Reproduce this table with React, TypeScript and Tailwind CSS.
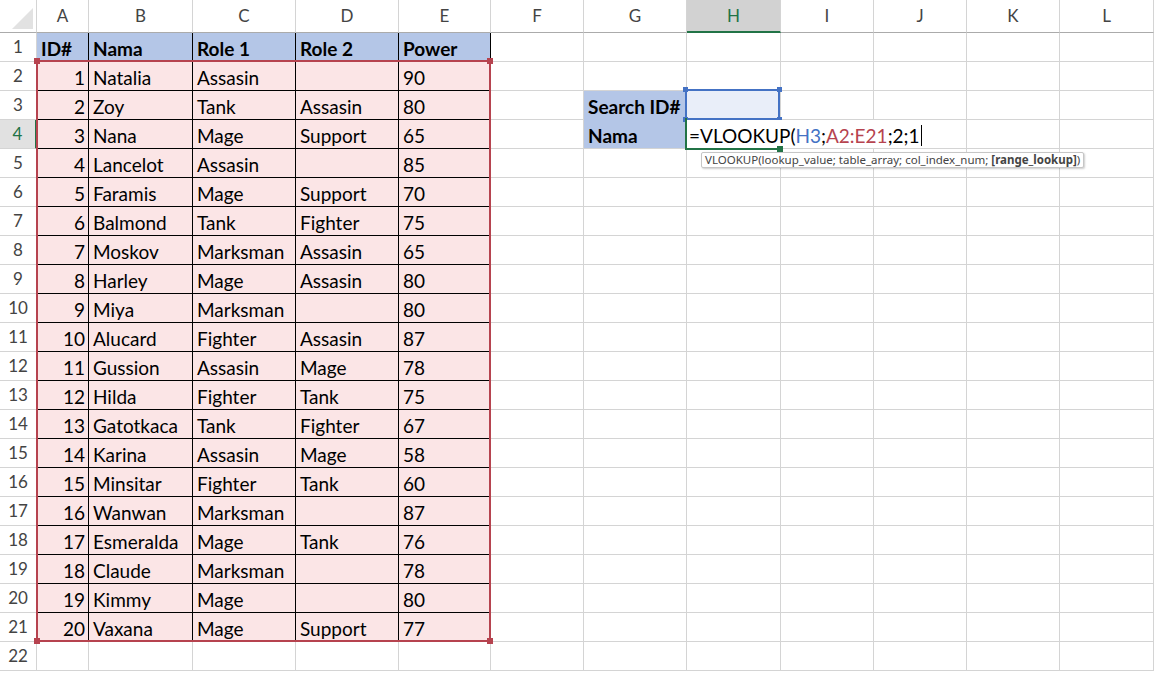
import React from 'react';

type Kind = 'plain' | 'head' | 'body' | 'label' | 'label2' | 'search' | 'editor';

interface CellDef {
  text?: string;
  kind: Kind;
  right?: boolean;
}

const letters = ['A', 'B', 'C', 'D', 'E', 'F', 'G', 'H', 'I', 'J', 'K', 'L'];

const heroes: [number, string, string, string, number][] = [
  [1, 'Natalia', 'Assasin', '', 90],
  [2, 'Zoy', 'Tank', 'Assasin', 80],
  [3, 'Nana', 'Mage', 'Support', 65],
  [4, 'Lancelot', 'Assasin', '', 85],
  [5, 'Faramis', 'Mage', 'Support', 70],
  [6, 'Balmond', 'Tank', 'Fighter', 75],
  [7, 'Moskov', 'Marksman', 'Assasin', 65],
  [8, 'Harley', 'Mage', 'Assasin', 80],
  [9, 'Miya', 'Marksman', '', 80],
  [10, 'Alucard', 'Fighter', 'Assasin', 87],
  [11, 'Gussion', 'Assasin', 'Mage', 78],
  [12, 'Hilda', 'Fighter', 'Tank', 75],
  [13, 'Gatotkaca', 'Tank', 'Fighter', 67],
  [14, 'Karina', 'Assasin', 'Mage', 58],
  [15, 'Minsitar', 'Fighter', 'Tank', 60],
  [16, 'Wanwan', 'Marksman', '', 87],
  [17, 'Esmeralda', 'Mage', 'Tank', 76],
  [18, 'Claude', 'Marksman', '', 78],
  [19, 'Kimmy', 'Mage', '', 80],
  [20, 'Vaxana', 'Mage', 'Support', 77],
];

const kindClass: Record<Kind, string> = {
  plain: 'bg-white border-r border-b border-[#d4d4d4]',
  head: 'bg-[#b4c6e7] border-r border-b border-r-black border-b-[#b6434f] font-bold',
  body: 'bg-[#fbe5e6] border-r border-b border-black',
  label: 'bg-[#b4c6e7] border-r border-b border-r-[#d4d4d4] border-b-[#b4c6e7] font-bold',
  label2: 'bg-[#b4c6e7] border-r border-b border-[#d4d4d4] font-bold',
  search: 'bg-[#e9eef9] border-r border-b border-[#d4d4d4]',
  editor: 'bg-white border-r border-b border-[#d4d4d4]',
};

function buildRows(): CellDef[][] {
  const rows: CellDef[][] = [];
  for (let r = 1; r <= 22; r++) {
    const row: CellDef[] = letters.map(() => ({ kind: 'plain' as Kind }));
    if (r === 1) {
      ['ID#', 'Nama', 'Role 1', 'Role 2', 'Power'].forEach((t, i) => {
        row[i] = { text: t, kind: 'head' };
      });
    } else if (r <= 21) {
      const h = heroes[r - 2];
      row[0] = { text: String(h[0]), kind: 'body', right: true };
      row[1] = { text: h[1], kind: 'body' };
      row[2] = { text: h[2], kind: 'body' };
      row[3] = { text: h[3], kind: 'body' };
      row[4] = { text: String(h[4]), kind: 'body' };
    }
    if (r === 3) {
      row[6] = { text: 'Search ID#', kind: 'label' };
      row[7] = { kind: 'search' };
    }
    if (r === 4) {
      row[6] = { text: 'Nama', kind: 'label2' };
      row[7] = { kind: 'editor' };
    }
    rows.push(row);
  }
  return rows;
}

// small square grips at the corners of a highlighted range
const Grips: React.FC<{ color: string; size: string }> = ({ color, size }) => (
  <>
    <div className={`absolute -left-[4px] -top-[4px] ${size} ${color}`} />
    <div className={`absolute -right-[4px] -top-[4px] ${size} ${color}`} />
    <div className={`absolute -left-[4px] -bottom-[4px] ${size} ${color}`} />
    <div className={`absolute -right-[4px] -bottom-[4px] ${size} ${color}`} />
  </>
);

const Editor: React.FC = () => (
  <>
    {/* in-cell editor text spilling over I4:J4 */}
    <div className="absolute left-0 top-0 z-20 h-[28px] w-[236px] bg-white flex items-center pt-[2px] pl-[2px] whitespace-nowrap text-[19px] leading-none">
      <span>=VLOOKUP(</span>
      <span className="text-[#4472c4]">H3</span>
      <span>;</span>
      <span className="text-[#b6434f]">A2:E21</span>
      <span>;2;1</span>
      <span className="ml-[1px] w-px h-[21px] bg-black" />
    </div>
    {/* active cell frame */}
    <div className="absolute -left-[2px] -top-[2px] z-20 w-[95px] h-[32px] border-l-2 border-b-2 border-[#217346]">
      <div className="absolute -right-[3px] -bottom-[4px] w-[6px] h-[6px] bg-[#217346]" />
    </div>
    {/* function tooltip */}
    <div className="absolute left-[14px] top-[32px] z-30 h-[16px] px-[3px] flex items-center bg-white border border-[#c6c6c6] rounded-[2px] shadow-[1px_1px_2px_rgba(0,0,0,0.2)] font-['Noto_Sans',sans-serif] text-[11.5px] leading-none text-[#444] whitespace-nowrap">
      VLOOKUP(lookup_value; table_array; col_index_num; <span className="font-bold ml-[3px]">[range_lookup]</span>)
    </div>
  </>
);

export default function App() {
  const rows = buildRows();

  return (
    <div className="w-[1156px] h-[675px] overflow-hidden bg-white font-[Lato,sans-serif] text-black">
      <div className="grid grid-cols-[37px_52px_104px_103px_103px_92px_93px_103px_94px_93px_93px_93px_94px] grid-rows-[33px_repeat(22,29px)]">
        {/* corner */}
        <div className="bg-white border-r border-b border-r-[#d4d4d4] border-b-[#ababab] flex items-end justify-end p-[3px]">
          <svg width="21" height="21" viewBox="0 0 21 21">
            <polygon points="21,0 21,21 0,21" fill="#e2e2e2" />
          </svg>
        </div>
        {/* column headers */}
        {letters.map((l) =>
          l === 'H' ? (
            <div
              key={l}
              className="flex items-center justify-center bg-[#d2d2d2] border-r border-r-[#d4d4d4] border-b-2 border-b-[#217346] text-[17px] text-[#217346]"
            >
              {l}
            </div>
          ) : (
            <div
              key={l}
              className="flex items-center justify-center bg-white border-r border-b border-r-[#d4d4d4] border-b-[#ababab] text-[17px] text-[#444]"
            >
              {l}
            </div>
          )
        )}

        {rows.map((row, ri) => (
          <React.Fragment key={ri}>
            {ri === 3 ? (
              <div className="flex items-center justify-center bg-[#e1e1e1] border-r-2 border-r-[#217346] border-b border-b-[#d4d4d4] text-[17px] text-[#217346]">
                {ri + 1}
              </div>
            ) : (
              <div className="flex items-center justify-center bg-white border-r border-b border-[#d4d4d4] text-[17px] text-[#444]">
                {ri + 1}
              </div>
            )}
            {row.map((c, ci) => (
              <div
                key={ci}
                className={`relative flex items-center pt-[2px] whitespace-nowrap text-[19px] leading-none ${kindClass[c.kind]} ${
                  c.right ? 'justify-end pr-[3px]' : 'pl-[4px]'
                }`}
              >
                {c.text}
                {ri === 1 && ci === 0 && (
                  // referenced range A2:E21
                  <div className="absolute -left-[1px] -top-[2px] z-10 w-[455px] h-[582px] border-2 border-[#b6434f] pointer-events-none">
                    <Grips color="bg-[#b6434f]" size="w-[6px] h-[6px]" />
                  </div>
                )}
                {c.kind === 'search' && (
                  <div className="absolute -left-[2px] -top-[2px] z-10 w-[95px] h-[31px] border-2 border-[#4472c4]">
                    <Grips color="bg-[#4472c4]" size="w-[5px] h-[5px]" />
                  </div>
                )}
                {c.kind === 'editor' && <Editor />}
              </div>
            ))}
          </React.Fragment>
        ))}
      </div>
    </div>
  );
}
